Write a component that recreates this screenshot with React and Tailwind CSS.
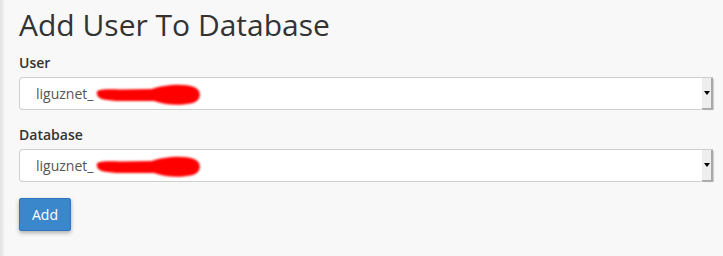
import React from 'react';

const Scribble = ({ variant }) => (
    <svg className="absolute left-[72px] top-[5px]" width="112" height="24" viewBox="0 0 112 24">
        <defs>
            <filter id={`blur-${variant}`}>
                <feGaussianBlur stdDeviation="1.2" />
            </filter>
        </defs>
        <g filter={`url(#blur-${variant})`} fill="#ff0000">
            <path d="M5 11 C 3 6, 12 6, 30 6.5 L 60 6 C 70 2, 92 0, 102 4 C 110 7, 110 17, 101 20 C 88 23, 72 22, 62 18 L 30 18 C 14 18, 5 16, 5 11 Z" />
        </g>
    </svg>
);

const FakeSelect = ({ value, variant }) => (
    <div className="relative flex h-[33px] w-[694px] items-center rounded-l-[4px] border border-r-0 border-[#cfcfcf] bg-white">
        <span className="pl-[16px] text-[14px] text-[#555]">{value}</span>
        <Scribble variant={variant} />
        <div className="ml-auto flex h-full w-[11px] items-center justify-center border-r-2 border-b border-[#a8a8a8] bg-[#eeeeee] shadow-[1px_1px_1px_rgba(0,0,0,0.15)]">
            <span className="block h-0 w-0 border-x-[3px] border-t-[4px] border-x-transparent border-t-black" />
        </div>
    </div>
);

export default function App() {
    return (
        <div className="flex h-[256px] w-[723px] bg-[#f8f8f8] font-['Open_Sans',sans-serif] text-[#333]">
            <div className="w-[4px] bg-gradient-to-r from-[#e2e2e2] to-[#efefef]" />
            <div className="flex flex-col pl-[15px] pt-[5px]">
                <h1 className="text-[30px] leading-[40px] text-[#333]">Add User To Database</h1>
                <label className="mt-[8px] text-[14px] font-semibold leading-[20px]">User</label>
                <div className="mt-[4px]">
                    <FakeSelect value="liguznet_" variant="u" />
                </div>
                <label className="mt-[15px] text-[14px] font-semibold leading-[20px]">Database</label>
                <div className="mt-[4px]">
                    <FakeSelect value="liguznet_" variant="d" />
                </div>
                <div className="mt-[16px]">
                    <button className="h-[33px] w-[52px] rounded-[2px] border border-[#2f75b8] bg-[#3a87cc] text-[14px] text-white shadow-[0_2px_4px_rgba(0,0,0,0.3)]">
                        Add
                    </button>
                </div>
            </div>
        </div>
    );
}
